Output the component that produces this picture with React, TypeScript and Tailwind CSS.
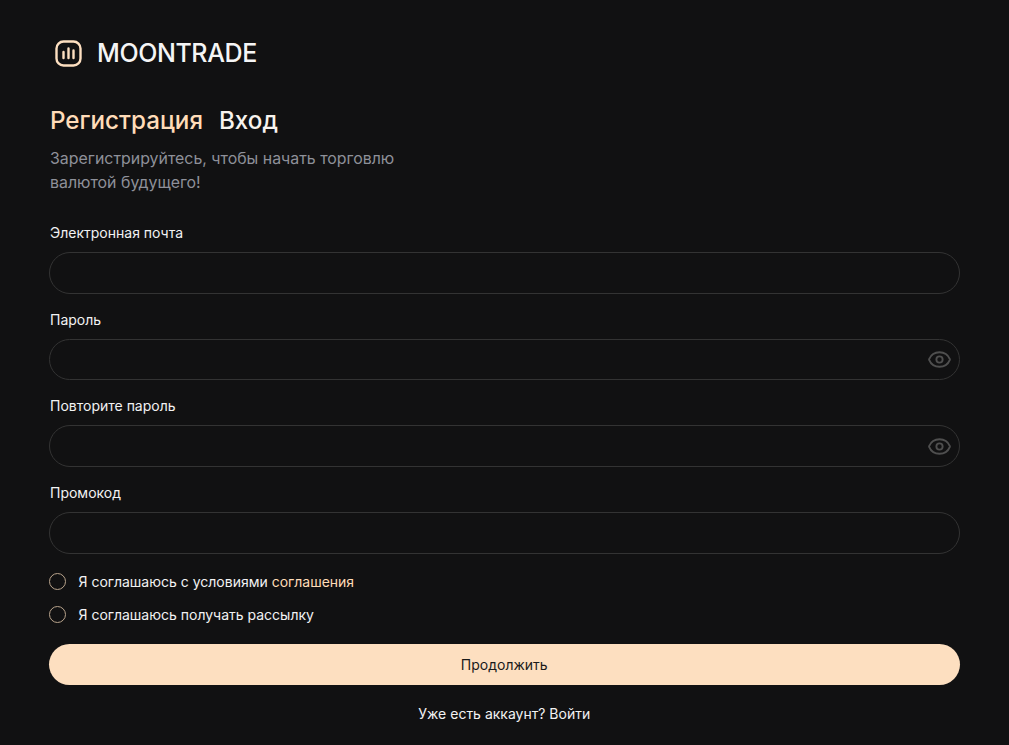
import type { ReactNode } from "react";
import { Eye } from "lucide-react";

function Field({ label, eye }: { label: string; eye?: boolean }) {
  return (
    <div className="flex flex-col">
      <label className="pl-[1px] text-[14px] leading-[20px] font-[420] text-[#f2f2f2] mb-[9px]">{label}</label>
      <div className="h-[41.67px] rounded-full border border-[#333333] flex items-center justify-end pr-[7px]">
        {eye && <Eye size={25} strokeWidth={1.8} className="text-[#4f4f4f]" />}
      </div>
    </div>
  );
}

function Agree({ children }: { children: ReactNode }) {
  return (
    <div className="flex items-center gap-[12.5px] h-[20px]">
      <span className="w-[17px] h-[17px] rounded-full border border-[#b9a48c]" />
      <span className="text-[14px] leading-[20px] font-[420] text-[#f2f2f2]">{children}</span>
    </div>
  );
}

export default function App() {
  return (
    <div className="w-[1009px] h-[745px] overflow-hidden bg-[#111112] pl-[49px] pr-[49.5px] font-['Inter',sans-serif]">
      <div className="flex items-center gap-[15px] pt-[39px] pl-[6px] h-[67px]">
        <svg width="27" height="27" viewBox="0 0 27 27" fill="none" stroke="#fddfc0" strokeWidth="2.4" strokeLinecap="round">
          <rect x="1.5" y="1.5" width="24" height="24" rx="7" />
          <path d="M8.5 12v6M13.5 8.5v9.5M18.5 10.5v7.5" />
        </svg>
        <span className="text-[25px] leading-[30px] font-[450] text-[#f5f5f5] tracking-[-0.4px]">MOONTRADE</span>
      </div>
      <div className="flex gap-[16px] mt-[38px] pl-[1px] text-[24.2px] leading-[32px] font-[550]">
        <span className="text-[#ffdcb8]">Регистрация</span>
        <span className="text-[#f7f3ee]">Вход</span>
      </div>
      <p className="mt-[10px] pl-[1px] text-[15.9px] leading-[24px] text-[#8e9099] w-[380px]">
        Зарегистрируйтесь, чтобы начать торговлю валютой будущего!
      </p>
      <div className="mt-[28px] flex flex-col gap-[16px]">
        <Field label="Электронная почта" />
        <Field label="Пароль" eye />
        <Field label="Повторите пароль" eye />
        <Field label="Промокод" />
      </div>
      <div className="mt-[18px] flex flex-col gap-[13px]">
        <Agree>
          Я соглашаюсь с условиями <span className="text-[#ffdcb8]">соглашения</span>
        </Agree>
        <Agree>Я соглашаюсь получать рассылку</Agree>
      </div>
      <button type="button" className="mt-[19px] w-full h-[41.67px] rounded-full bg-[#fddfc0] text-[14px] font-[420] text-[#1a1a1a]">
        Продолжить
      </button>
      <p className="mt-[18.33px] text-center text-[14px] leading-[20px] font-[420] text-[#f2f2f2]">Уже есть аккаунт? Войти</p>
    </div>
  );
}
